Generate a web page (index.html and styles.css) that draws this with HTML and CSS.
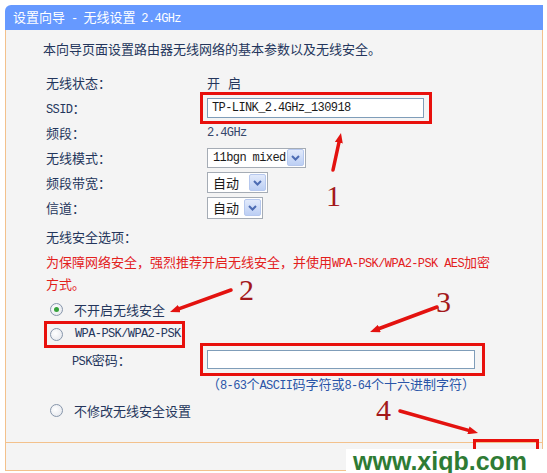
FILE: index.html
```html
<!DOCTYPE html>
<html lang="zh-CN">
<head>
    <meta charset="UTF-8">
    <meta name="viewport" content="width=device-width, initial-scale=1.0">
    <title>设置向导 - 无线设置 2.4GHz</title>
    <link rel="stylesheet" href="styles.css">
</head>
<body>
    <div class="page">
        <div class="wizard">
            <div class="title">设置向导 <span class="en">-</span> 无线设置 <span class="en">2.4GHz</span></div>

            <div class="content">
                <p class="intro">本向导页面设置路由器无线网络的基本参数以及无线安全。</p>

                <div class="row">
                    <span class="label">无线状态：</span>
                    <span class="value spaced">开 启</span>
                </div>
                <div class="row">
                    <span class="label"><span class="en">SSID</span>：</span>
                    <span class="mark mark-ssid"><span class="field field-ssid en">TP-LINK_2.4GHz_130918</span></span>
                </div>
                <div class="row">
                    <span class="label">频段：</span>
                    <span class="value en">2.4GHz</span>
                </div>
                <div class="row">
                    <span class="label">无线模式：</span>
                    <span class="select select-mode"><span class="en">11bgn mixed</span><span class="drop"><svg width="9" height="6" viewBox="0 0 9 6"><polyline points="1,1 4.5,4.5 8,1"/></svg></span></span>
                </div>
                <div class="row">
                    <span class="label">频段带宽：</span>
                    <span class="select select-width"><span>自动</span><span class="drop"><svg width="9" height="6" viewBox="0 0 9 6"><polyline points="1,1 4.5,4.5 8,1"/></svg></span></span>
                </div>
                <div class="row">
                    <span class="label">信道：</span>
                    <span class="select select-channel"><span>自动</span><span class="drop"><svg width="9" height="6" viewBox="0 0 9 6"><polyline points="1,1 4.5,4.5 8,1"/></svg></span></span>
                </div>

                <div class="row section">
                    <span class="label">无线安全选项：</span>
                </div>
                <p class="warn">为保障网络安全，强烈推荐开启无线安全，并使用<span class="en">WPA-PSK/WPA2-PSK AES</span>加密方式。</p>

                <div class="row option">
                    <span class="radio checked"></span>
                    <span>不开启无线安全</span>
                </div>
                <div class="row">
                    <span class="mark mark-option">
                        <span class="radio"></span>
                        <span class="en">WPA-PSK/WPA2-PSK</span>
                    </span>
                </div>
                <div class="row psk">
                    <span class="label"><span class="en">PSK</span>密码：</span>
                    <span class="mark mark-psk"><span class="field field-psk"></span></span>
                </div>
                <div class="hint">（<span class="en">8-63</span>个<span class="en">ASCII</span>码字符或<span class="en">8-64</span>个十六进制字符）</div>
                <div class="row option last">
                    <span class="radio"></span>
                    <span>不修改无线安全设置</span>
                </div>
            </div>

            <div class="footer">
                <button class="btn">上一步</button>
                <span class="mark mark-next"><button class="btn">下一步</button></span>
            </div>
        </div>

        <!-- hand-drawn annotations on top of the screenshot -->
        <svg class="notes" width="547" height="473" viewBox="0 0 547 473">
            <defs>
                <marker id="head" viewBox="0 0 10 8" refX="3" refY="4" markerWidth="10" markerHeight="8" markerUnits="userSpaceOnUse" orient="auto">
                    <path d="M0,0 L10,4 L0,8 z" fill="#e3120f"/>
                </marker>
            </defs>
            <line x1="333" y1="170" x2="339.5" y2="139.8" marker-end="url(#head)"/>
            <line x1="231" y1="290" x2="176.6" y2="309.6" marker-end="url(#head)"/>
            <line x1="437" y1="307" x2="376.6" y2="329.5" marker-end="url(#head)"/>
            <line x1="400" y1="411" x2="471.3" y2="431.1" marker-end="url(#head)"/>
            <text x="326" y="206">1</text>
            <text x="239" y="300">2</text>
            <text x="436" y="312">3</text>
            <text x="376" y="420">4</text>
        </svg>

        <div class="watermark">www.xiqb.com</div>
    </div>
</body>
</html>
```

FILE: styles.css
```css
body {
    margin: 0;
    background: #fff;
    font-family: "Noto Sans CJK SC", sans-serif;
    font-size: 13px;
    color: #24365c;
}
.page {
    position: relative;
    width: 547px;
    height: 473px;
    overflow: hidden;
}
.en {
    font-family: "Liberation Mono", "Noto Sans CJK SC", monospace;
    font-size: 12px;
    letter-spacing: -0.6px;
}
.wizard {
    margin: 5px 0 0 5px;
    width: 538px;
}
.title {
    height: 25px;
    line-height: 24px;
    padding-left: 8px;
    background: #6699ff;
    color: #fff;
    border-top-left-radius: 6px;
    word-spacing: 3px;
}
.content {
    padding: 9px 0 19px 37px;
    background: #f4f4f4;
    border: 1px solid #f3c18c;
    border-top: none;
}
.intro {
    margin: 0 0 11px;
    line-height: 20px;
}
.row {
    display: flex;
    align-items: center;
    height: 25px;
    padding-left: 3px;
}
.label {
    width: 161px;
    flex-shrink: 0;
}
.spaced {
    word-spacing: 5px;
}
.value.en {
    color: #34466a;
}
.section {
    margin-top: 4px;
}
.warn {
    width: 452px;
    margin: 3px 0 0 3px;
    line-height: 20px;
    color: #e3201c;
}
.option {
    margin-top: 3px;
    padding-left: 7px;
    gap: 11px;
}
.option.last {
    margin-top: 2px;
}
.psk {
    padding-left: 29px;
}
.psk .label {
    width: 135px;
}
.hint {
    height: 24px;
    line-height: 24px;
    padding-left: 164px;
    color: #2a55a8;
}

/* red boxes drawn around the important controls */
.mark {
    display: inline-flex;
    align-items: center;
    border: 3px solid #e8100c;
    flex-shrink: 0;
}
.mark-ssid {
    margin-left: -7px;
    padding: 3px 5px 3px 4px;
}
.mark-option {
    margin-left: -2px;
    padding: 3px 1px 3px 3px;
    gap: 12px;
    line-height: 15px;
}
.mark-psk {
    margin-left: -7px;
    padding: 4px 7px 4px 4px;
}
.mark-next {
    margin-top: -4px;
    padding: 7px 3px 0;
    border-bottom: none;
    height: 40px;
}

.field {
    display: flex;
    align-items: center;
    box-sizing: border-box;
    padding-left: 4px;
    background: #fff;
    border: 1px solid #7f9db9;
    color: #1a1a1a;
}
.field-ssid {
    width: 217px;
    height: 20px;
}
.field-psk {
    width: 268px;
    height: 19px;
}
.select {
    display: inline-flex;
    align-items: center;
    justify-content: space-between;
    box-sizing: border-box;
    height: 21px;
    padding: 0 1px 0 5px;
    background: #fff;
    border: 1px solid #a5acb5;
    color: #1a1a1a;
}
.select-mode {
    width: 99px;
    height: 20px;
}
.select-width {
    width: 61px;
}
.select-channel {
    width: 56px;
    height: 22px;
}
.drop {
    display: flex;
    align-items: center;
    justify-content: center;
    width: 15px;
    height: 15px;
    background: linear-gradient(#e2eafb, #bccff4);
    border: 1px solid #b6c8ee;
    border-radius: 2px;
}
.drop polyline {
    fill: none;
    stroke: #4d6cb3;
    stroke-width: 2;
}
.radio {
    width: 11px;
    height: 11px;
    border: 1px solid #8796ab;
    border-radius: 50%;
    background: radial-gradient(circle at 40% 40%, #fff, #e1e4ea);
    display: flex;
    align-items: center;
    justify-content: center;
    flex-shrink: 0;
}
.radio.checked::after {
    content: "";
    width: 5px;
    height: 5px;
    border-radius: 50%;
    background: #35a23a;
}

.footer {
    display: flex;
    justify-content: flex-end;
    align-items: flex-start;
    gap: 8px;
    height: 27px;
    padding-right: 3px;
    background: #f4f4f4;
    border: 1px solid #f3c18c;
    border-top: none;
}
.btn {
    width: 55px;
    height: 22px;
    margin-top: 6px;
    padding: 0;
    font-family: "Noto Sans CJK SC", sans-serif;
    font-size: 12px;
    color: #24365c;
    background: linear-gradient(#fdfdfe, #dde4f0);
    border: 1px solid #7f9db9;
    border-radius: 2px;
}
.mark-next .btn {
    margin-top: 0;
    width: 54px;
}

.notes {
    position: absolute;
    top: 0;
    left: 0;
    pointer-events: none;
}
.notes line {
    stroke: #e3120f;
    stroke-width: 3.5;
    stroke-linecap: round;
}
.notes text {
    font-family: "Liberation Serif", serif;
    font-size: 30px;
    fill: #a3181a;
}
.watermark {
    position: absolute;
    left: 346px;
    top: 449px;
    width: 194px;
    height: 24px;
    padding-left: 7px;
    background: #fff;
    font-family: "Liberation Sans", Arial, sans-serif;
    font-weight: bold;
    font-size: 25px;
    line-height: 24px;
    color: #2e7b34;
}
```
